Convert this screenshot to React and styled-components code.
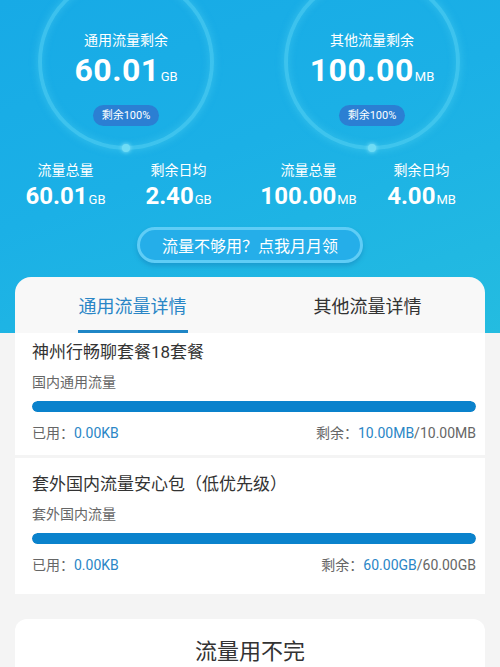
import React from "react";
import styled, { createGlobalStyle } from "styled-components";

const GlobalStyle = createGlobalStyle`
  html, body {
    margin: 0;
    padding: 0;
    background: #f4f4f4;
    font-family: Roboto, "Noto Sans CJK SC", sans-serif;
  }
  * { box-sizing: border-box; }
`;

const Page = styled.div`
  width: 500px;
  min-height: 667px;
  overflow: hidden;
  background: #f4f4f4;
`;

const Header = styled.header`
  background: linear-gradient(160deg, #17aae6 0%, #1bb0e6 45%, #24bce0 100%);
`;

const Rings = styled.div`
  display: flex;
  justify-content: space-between;
  padding: 0 40px 0 38px;
  height: 155px;
`;

const Ring = styled.div`
  position: relative;
  width: 176px;
  height: 176px;
  margin-top: -26px;
  border-radius: 50%;
  border: 4px solid rgba(95, 215, 245, 0.5);
  box-shadow: 0 0 8px rgba(110, 225, 250, 0.35), inset 0 0 8px rgba(110, 225, 250, 0.3);
  display: flex;
  flex-direction: column;
  align-items: center;
  padding-top: 53px;
  color: #fff;

  &::after {
    content: "";
    position: absolute;
    left: 50%;
    bottom: -6px;
    width: 8px;
    height: 8px;
    margin-left: -4px;
    border-radius: 50%;
    background: #6fdcf5;
    box-shadow: 0 0 4px #8fe9fb;
  }
`;

const RingLabel = styled.div`
  font-size: 14px;
  line-height: 18px;
  margin-bottom: 1px;
`;

const BigValue = styled.div`
  display: flex;
  align-items: baseline;
  font-weight: 700;
  font-size: 32px;
  line-height: 40px;
  letter-spacing: 0.5px;
`;

const Unit = styled.span`
  font-weight: 400;
  font-size: 13px;
  margin-left: 1px;
  letter-spacing: 0;
`;

const Pill = styled.div`
  margin-top: 8px;
  background: #2b7fd3;
  border-radius: 11px;
  padding: 0 9px;
  height: 21px;
  line-height: 21px;
  font-size: 11px;
`;

const StatsRow = styled.div`
  display: flex;
  padding-left: 9px;
  color: #fff;
`;

const Stat = styled.div`
  width: 113px;
  text-align: center;
  margin-right: ${(p) => (p.$gap ? 17 : 0)}px;
`;

const StatLabel = styled.div`
  font-size: 14px;
  line-height: 20px;
  margin-top: 5px;
`;

const StatValue = styled.div`
  display: flex;
  justify-content: center;
  align-items: baseline;
  font-weight: 700;
  font-size: 24px;
  line-height: 32px;
`;

const ActionWrap = styled.div`
  display: flex;
  justify-content: center;
  padding: 11px 0 14px;
`;

const ActionButton = styled.button`
  width: 226px;
  height: 36px;
  border-radius: 18px;
  border: 3px solid #5fcdf6;
  background: #25aee9;
  color: #fff;
  font-family: inherit;
  font-size: 16px;
  box-shadow: 0 3px 4px rgba(20, 110, 170, 0.35);
  cursor: pointer;
`;

const TabBar = styled.div`
  margin: 0 15px;
  height: 56px;
  border-radius: 16px 16px 0 0;
  background: #f8f8f8;
  display: flex;
`;

const Tab = styled.div`
  flex: 1;
  display: flex;
  justify-content: center;
  align-items: center;
  position: relative;
  font-size: 18px;
  color: ${(p) => (p.$active ? "#2a86c6" : "#333")};

  &::after {
    content: "";
    display: ${(p) => (p.$active ? "block" : "none")};
    position: absolute;
    bottom: 0;
    left: 50%;
    width: 110px;
    margin-left: -55px;
    height: 3px;
    background: #1f86c6;
  }
`;

const Cards = styled.div`
  display: flex;
  flex-direction: column;
  gap: 3px;
  padding: 0 15px;
`;

const Card = styled.div`
  background: #fff;
  padding: 14px 9px 19px 17px;

  &:first-child {
    padding-top: 7px;
    padding-bottom: 12px;
  }
`;

const CardTitle = styled.div`
  font-size: 17px;
  color: #333;
  line-height: 24px;
`;

const CardSub = styled.div`
  font-size: 14px;
  color: #666;
  line-height: 20px;
  margin-top: 8px;
`;

const Bar = styled.div`
  height: 11px;
  border-radius: 6px;
  background: #e8e8e8;
  margin-top: 9px;
  overflow: hidden;
`;

const BarFill = styled.div`
  height: 100%;
  border-radius: 6px;
  background: #0a82cc;
`;

const CardFoot = styled.div`
  display: flex;
  justify-content: space-between;
  font-size: 14px;
  color: #666;
  line-height: 20px;
  margin-top: 11px;
`;

const Blue = styled.span`
  color: #2a86c6;
`;

const Promo = styled.div`
  margin: 25px 15px 0;
  background: #fff;
  border-radius: 12px 12px 0 0;
  height: 60px;
  display: flex;
  justify-content: center;
  padding-top: 14px;
  font-size: 22px;
  color: #333;
`;

const rings = [
  { label: "通用流量剩余", value: "60.01", unit: "GB" },
  { label: "其他流量剩余", value: "100.00", unit: "MB" },
];

const stats = [
  { label: "流量总量", value: "60.01", unit: "GB" },
  { label: "剩余日均", value: "2.40", unit: "GB", gap: true },
  { label: "流量总量", value: "100.00", unit: "MB" },
  { label: "剩余日均", value: "4.00", unit: "MB" },
];

const packs = [
  {
    title: "神州行畅聊套餐18套餐",
    sub: "国内通用流量",
    used: "0.00KB",
    left: "10.00MB",
    total: "10.00MB",
    pct: 100,
  },
  {
    title: "套外国内流量安心包（低优先级）",
    sub: "套外国内流量",
    used: "0.00KB",
    left: "60.00GB",
    total: "60.00GB",
    pct: 100,
  },
];

export default function App() {
  return (
    <Page>
      <GlobalStyle />
      <Header>
        <Rings>
          {rings.map((r) => (
            <Ring key={r.label}>
              <RingLabel>{r.label}</RingLabel>
              <BigValue>
                {r.value}
                <Unit>{r.unit}</Unit>
              </BigValue>
              <Pill>剩余100%</Pill>
            </Ring>
          ))}
        </Rings>
        <StatsRow>
          {stats.map((s, i) => (
            <Stat key={i} $gap={s.gap}>
              <StatLabel>{s.label}</StatLabel>
              <StatValue>
                {s.value}
                <Unit>{s.unit}</Unit>
              </StatValue>
            </Stat>
          ))}
        </StatsRow>
        <ActionWrap>
          <ActionButton>流量不够用？点我月月领</ActionButton>
        </ActionWrap>
        <TabBar>
          <Tab $active>通用流量详情</Tab>
          <Tab>其他流量详情</Tab>
        </TabBar>
      </Header>
      <Cards>
        {packs.map((p) => (
          <Card key={p.title}>
            <CardTitle>{p.title}</CardTitle>
            <CardSub>{p.sub}</CardSub>
            <Bar>
              <BarFill style={{ width: `${p.pct}%` }} />
            </Bar>
            <CardFoot>
              <span>
                已用：<Blue>{p.used}</Blue>
              </span>
              <span>
                剩余：<Blue>{p.left}</Blue>/{p.total}
              </span>
            </CardFoot>
          </Card>
        ))}
      </Cards>
      <Promo>流量用不完</Promo>
    </Page>
  );
}
